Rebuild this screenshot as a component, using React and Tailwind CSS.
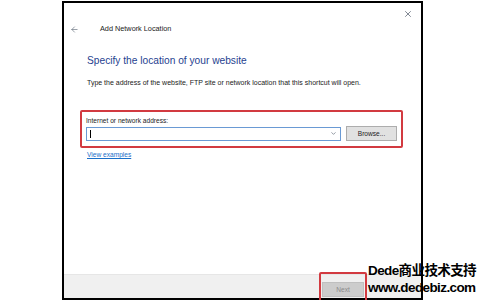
import { ChevronDown, ArrowLeft, X } from 'lucide-react';

const App = () => {
  return (
    <div className="relative w-[484px] h-[300px] bg-white overflow-hidden" style={{ fontFamily: '"Liberation Sans", Arial, sans-serif' }}>
      {/* dialog window */}
      <div className="ml-[62px] mt-[1px] w-[361px] h-[299px] border-2 border-black bg-white flex flex-col">
        <div className="flex justify-end pr-[8px] pt-[6px] h-[16px]">
          <X className="w-[10px] h-[10px] text-gray-700" strokeWidth={1.5} />
        </div>
        <div className="flex items-center h-[20px] pl-[6px]">
          <ArrowLeft className="w-[9px] h-[9px] text-gray-600" strokeWidth={1.5} />
          <span className="ml-[21px] text-[7.3px] text-[#1a1a1a]">Add Network Location</span>
        </div>
        <div className="pl-[23px] pr-[16px] pt-[15px]">
          <h1 className="text-[10.2px] leading-[13px] text-[#1f3f8f]">Specify the location of your website</h1>
          <p className="mt-[11px] text-[7px] leading-[9px] text-[#222]">
            Type the address of the website, FTP site or network location that this shortcut will open.
          </p>
          <div className="mt-[23px] -ml-[7px] w-[323px] h-[38px] border-2 border-[#d23a40] rounded-[2px] pl-[4px] pt-[4px]">
            <div className="text-[6.6px] leading-[9px] text-[#222]">Internet or network address:</div>
            <div className="flex items-center mt-[1px]">
              <div className="w-[255px] h-[14px] border border-[#6a9ad4] bg-white flex items-center pl-[3px] pr-[3px]">
                <div className="w-px h-[8px] bg-black" />
                <div className="flex-1" />
                <ChevronDown className="w-[7px] h-[7px] text-gray-600" strokeWidth={2} />
              </div>
              <button className="ml-[5px] w-[51px] h-[15px] border border-[#adadad] bg-[#e1e1e1] text-[6.6px] text-[#222]">
                Browse...
              </button>
            </div>
          </div>
          <a className="block mt-[2px] text-[6.6px] leading-[9px] text-[#1a6fc9] underline">View examples</a>
        </div>
        <div className="flex-1" />
        <div className="h-[24px] bg-[#f0f0f0] border-t border-[#e6e6e6] flex items-center justify-end pr-[54px]">
          <div className="border-2 border-[#d23a40] rounded-[2px] p-[1px]">
            <button className="w-[42px] h-[15px] bg-[#cccccc] border border-[#bfbfbf] text-[6.6px] text-[#8a8a8a]">Next</button>
          </div>
        </div>
      </div>
      {/* watermark */}
      <div
        className="absolute left-[368px] top-[262px] text-[13.5px] leading-[17px] font-bold text-black tracking-[-0.6px]"
        style={{ fontFamily: '"Liberation Sans", "Noto Sans CJK SC", sans-serif' }}
      >
        <div>Dede商业技术支持</div>
        <div>www.dedebiz.com</div>
      </div>
    </div>
  );
};

export default App;
